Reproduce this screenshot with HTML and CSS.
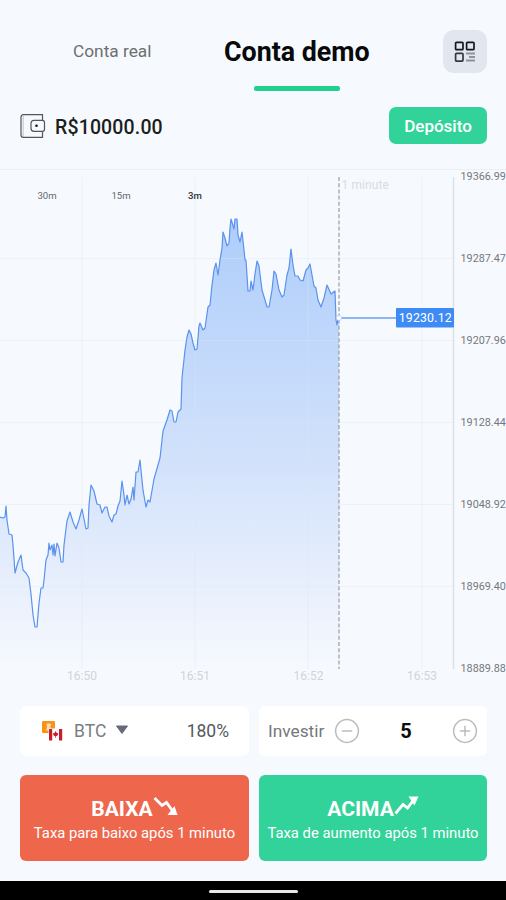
FILE: index.html
```html
<!DOCTYPE html>
<html lang="pt-BR">

<head>
   <meta charset="utf-8">
   <meta name="viewport" content="width=device-width, initial-scale=1">
   <title>Conta demo</title>
   <link rel="stylesheet" href="styles.css">
</head>

<body>

   <!-- account tabs -->
   <header class="tabs">
      <span class="tab">Conta real</span>
      <span class="tab tab-active">Conta demo</span>
      <button class="menu-btn" aria-label="Menu">
         <svg width="22" height="22" viewBox="0 0 22 22" fill="none" stroke="#15171b" stroke-width="1.7">
            <rect x="1.6" y="1.3" width="7.4" height="7.4" rx="1" />
            <rect x="12.6" y="1.3" width="7.4" height="7.4" rx="1" />
            <rect x="1.6" y="12.3" width="7.4" height="7.8" rx="1" stroke="#34373d" />
            <path d="M12 12.5h9M15 16h6M12 19.5h9" stroke="#8e939d" stroke-width="1.8" />
         </svg>
      </button>
   </header>

   <!-- balance -->
   <section class="balance">
      <svg class="wallet" width="26" height="26" viewBox="0 0 26 26" fill="none" stroke="#54575a" stroke-width="1.2">
         <path d="M22.5 7V1.7H3.5Q1 1.7 1 4.2V22Q1 24.4 3.5 24.4H22.5V18.5" />
         <path d="M3.2 2v22" stroke="#b5b8bb" stroke-width=".8" />
         <path d="M14 7.3H22.5Q24.5 7.3 24.5 9.5V16Q24.5 18.3 22.5 18.3H14Q11 18.3 11 15.3V10.3Q11 7.3 14 7.3Z" />
         <circle cx="16.500" cy="12.800" r="1.300" fill="#111" stroke="none" />
      </svg>
      <span class="amount">R$10000.00</span>
      <button class="deposit">Depósito</button>
   </section>

   <!-- price chart -->
   <section class="chart">
      <svg width="506" height="520" viewBox="0 170 506 520">
         <defs>
            <linearGradient id="area" gradientUnits="userSpaceOnUse" x1="0" y1="218" x2="0" y2="669">
               <stop offset="0" stop-color="#aecdfb" />
               <stop offset=".5" stop-color="#cfe0fb" />
               <stop offset=".85" stop-color="#ebf1fd" />
               <stop offset="1" stop-color="#f6f9fe" />
            </linearGradient>
         </defs>

         <path fill="url(#area)" d="M0 669V517L3 518 5 517 6 506 7 520 9 534 12 535 13 545 15 573 18 562 21 555 23 570 26 573 29 578 31 594 33 615 35 627H37L39 603 41 588H43L44 580 46 560 48 555 49 543 50 550 52 545 53 555 54 544 55 556 57 543 59 548 61 562H63L64 545 67 521 70 512 73 522 76 529 79 520 82 509 84 519 86 529 88 528 89 505 91 485 94 491 97 504 100 505 102 513 105 507H107L109 516 112 522 114 515 116 514 118 506 120 501 122 481 124 495 125 505 127 495 129 504 131 499 133 487 134 500 136 472H138L140 460 141 470 143 490 146 507 148 500 150 502 154 479 160 458 163 431 167 420 170 410 172 411 174 422H176L178 412 181 409 182 378 185 350 187 337 189 330 191 334 193 343 195 350 197 349 199 326 200 323 203 330 205 328 208 307 210 305 212 285 214 270 216 263 218 275 220 260 222 248 223 232 225 238 227 246 229 243 230 228 231 219 234 229 235 219H237L238 235 240 242 242 232 244 250 245 260H246L248 291H250L251 281 253 290 255 274 257 261 259 266 262 290 265 300 267 307H269L272 290 274 271 276 274 279 290 282 297 284 295 287 275 289 268 291 249 293 265 295 276H298L300 280 303 281 306 270 308 268 310 264 312 275 314 286 316 288 318 300 321 307 324 298 327 285 331 294 335 291 336 320 337 325 338 318H339V669Z" />

         <g class="grid">
            <path d="M82 177V669M195 177V669M308 177V669M422 177V669" />
            <path d="M0 258.500H453M0 340.500H453M0 422.500H453M0 504.500H453M0 586.500H453" />
         </g>
         <path class="axis" d="M453.500 177V669" />

         <path class="line" d="M0 517L3 518 5 517 6 506 7 520 9 534 12 535 13 545 15 573 18 562 21 555 23 570 26 573 29 578 31 594 33 615 35 627H37L39 603 41 588H43L44 580 46 560 48 555 49 543 50 550 52 545 53 555 54 544 55 556 57 543 59 548 61 562H63L64 545 67 521 70 512 73 522 76 529 79 520 82 509 84 519 86 529 88 528 89 505 91 485 94 491 97 504 100 505 102 513 105 507H107L109 516 112 522 114 515 116 514 118 506 120 501 122 481 124 495 125 505 127 495 129 504 131 499 133 487 134 500 136 472H138L140 460 141 470 143 490 146 507 148 500 150 502 154 479 160 458 163 431 167 420 170 410 172 411 174 422H176L178 412 181 409 182 378 185 350 187 337 189 330 191 334 193 343 195 350 197 349 199 326 200 323 203 330 205 328 208 307 210 305 212 285 214 270 216 263 218 275 220 260 222 248 223 232 225 238 227 246 229 243 230 228 231 219 234 229 235 219H237L238 235 240 242 242 232 244 250 245 260H246L248 291H250L251 281 253 290 255 274 257 261 259 266 262 290 265 300 267 307H269L272 290 274 271 276 274 279 290 282 297 284 295 287 275 289 268 291 249 293 265 295 276H298L300 280 303 281 306 270 308 268 310 264 312 275 314 286 316 288 318 300 321 307 324 298 327 285 331 294 335 291 336 320 337 325 338 318" />

         <!-- expiry marker and current price -->
         <path class="expiry" d="M339 177V669" />
         <path class="price-line" d="M339 318H397" />
         <circle cx="339" cy="318" r="2.500" fill="#fff" stroke="#a9c6f8" stroke-width=".6" />
         <rect x="396" y="308" width="58" height="19.500" rx="1" fill="#3f8bf5" />
         <text class="price" x="425.300" y="322.300">19230.12</text>
         <text class="minute" x="341.500" y="189">1 minute</text>

         <g class="range">
            <text x="47" y="199">30m</text>
            <text x="121" y="199">15m</text>
            <text class="range-on" x="195" y="199">3m</text>
         </g>
         <g class="values">
            <text x="460.500" y="180">19366.99</text>
            <text x="460.500" y="262">19287.47</text>
            <text x="460.500" y="344">19207.96</text>
            <text x="460.500" y="426">19128.44</text>
            <text x="460.500" y="508">19048.92</text>
            <text x="460.500" y="590">18969.40</text>
            <text x="460.500" y="672">18889.88</text>
         </g>
         <g class="times">
            <text x="82" y="680">16:50</text>
            <text x="195" y="680">16:51</text>
            <text x="308.500" y="680">16:52</text>
            <text x="422" y="680">16:53</text>
         </g>
      </svg>
   </section>

   <!-- order form -->
   <section class="order">
      <div class="field pair">
         <svg width="22" height="22" viewBox="0 0 22 22">
            <rect x="1" y="1" width="13" height="12" rx="1" fill="#f7931a" />
            <path d="M5.500 3.500H8.500Q10.500 3.500 10 5.500L9 6.500Q11 8 9.500 9.500L8 10.500H5L6 7Z" fill="#ffe0ac" />
            <rect x="7.500" y="8.500" width="14" height="12.500" rx="1" fill="#fff" />
            <path d="M8 9H11.200V20.500H8ZM18 9H21.200V20.500H18Z" fill="#c51f2b" />
            <path d="M14.600 11L15.700 13 17.500 13.500 16.500 15.500 14.900 16.300V18H14.300V16.300L12.700 15.500 11.800 13.500 13.500 13Z" fill="#c51f2b" />
         </svg>
         <span class="symbol">BTC</span>
         <svg class="caret" width="14" height="10" viewBox="0 0 14 10"><path d="M1.500 1H12.500L7 8.500Z" fill="#666a79" stroke="#666a79" stroke-linejoin="round" /></svg>
         <span class="payout">180%</span>
      </div>
      <div class="field invest">
         <span class="invest-label">Investir</span>
         <svg width="26" height="26" viewBox="0 0 26 26" fill="none" stroke="#bdbdbd" stroke-width="1.500"><circle cx="13" cy="13" r="11.400" /><path d="M7.800 13H18.200" /></svg>
         <span class="stake">5</span>
         <svg width="26" height="26" viewBox="0 0 26 26" fill="none" stroke="#bdbdbd" stroke-width="1.500"><circle cx="13" cy="13" r="11.400" /><path d="M7.800 13H18.200M13 7.800V18.200" /></svg>
      </div>
      <button class="trade down">
         <span class="trade-title">BAIXA<svg width="25" height="22" viewBox="0 0 25 22"><path d="M1.500 3L9 10.500 13.500 7.500 20 16.500" fill="none" stroke="#fff" stroke-width="2.800" /><path d="M21.500 11L24.500 20H14.500Z" fill="#fff" /></svg></span>
         <span class="trade-note">Taxa para baixo após 1 minuto</span>
      </button>
      <button class="trade up">
         <span class="trade-title">ACIMA<svg width="25" height="22" viewBox="0 0 25 22"><path d="M1.500 18.500L9 9.500 13.500 13 20 4.500" fill="none" stroke="#fff" stroke-width="2.800" /><path d="M14.500 1.500H24.500L20.500 10.500Z" fill="#fff" /></svg></span>
         <span class="trade-note">Taxa de aumento após 1 minuto</span>
      </button>
   </section>

   <footer class="navbar"><span class="handle"></span></footer>

</body>

</html>
```
FILE: styles.css
```css
* {
   box-sizing: border-box;
}
body {
   margin: 0;
   width: 506px;
   height: 900px;
   overflow: hidden;
   display: flex;
   flex-direction: column;
   background: #f6fafe;
   color: #0c0d0f;
   font-family: Roboto, "Liberation Sans", sans-serif;
}
button {
   border: none;
   padding: 0;
   font-family: inherit;
}
svg {
   display: block;
   flex: none;
}

.tabs {
   height: 95px;
   padding: 30px 19px 0 73px;
   display: flex;
   align-items: flex-start;
}
.tab {
   width: 151px;
   line-height: 43px;
   font-size: 17.3px;
   color: #6c6f73;
   white-space: nowrap;
}
.tab-active {
   width: 146px;
   line-height: 45px;
   font-size: 26.8px;
   font-weight: 700;
   color: #08090a;
}
.tab-active::after {
   content: "";
   display: block;
   width: 86px;
   height: 5px;
   margin: 11px auto 0;
   border-radius: 2px;
   background: #20d08e;
}
.menu-btn {
   width: 44px;
   height: 43px;
   margin-left: auto;
   border-radius: 11px;
   background: #e1e6ef;
   display: flex;
   align-items: center;
   justify-content: center;
}

.balance {
   height: 75px;
   padding: 12px 19px 0 20px;
   display: flex;
   align-items: flex-start;
   border-bottom: 1px solid #edf0f3;
}
.wallet {
   margin-top: 6px;
}
.amount {
   margin-left: 9px;
   line-height: 41px;
   font-size: 19.5px;
   font-weight: 500;
   letter-spacing: .15px;
   color: #1c1e20;
}
.deposit {
   width: 98px;
   height: 37px;
   margin-left: auto;
   border-radius: 7px;
   background: #31d39a;
   color: #fff;
   font-size: 17px;
   font-weight: 500;
}

.chart {
   height: 520px;
}
.grid {
   fill: none;
   stroke: #dfe7ef;
   stroke-opacity: .4;
}
.axis {
   stroke: #dde1e5;
   stroke-width: 1.5;
}
.line {
   fill: none;
   stroke: #5a92ee;
   stroke-width: 1.2;
   stroke-linejoin: round;
}
.expiry {
   stroke: #a0a4a9;
   stroke-width: 1.3;
   stroke-dasharray: 4 2.2;
}
.price-line {
   stroke: #6c9ff1;
   stroke-width: 1.3;
}
.price {
   fill: #fff;
   font-size: 12.3px;
   letter-spacing: .2px;
   text-anchor: middle;
}
.minute {
   fill: #d8dce0;
   font-size: 12px;
   letter-spacing: .1px;
}
.range {
   fill: #66696d;
   font-size: 9.6px;
   text-anchor: middle;
}
.range-on {
   fill: #303234;
   font-weight: 500;
}
.values {
   fill: #74787d;
   font-size: 10.8px;
}
.times {
   fill: #d0d4d9;
   font-size: 12px;
   text-anchor: middle;
}

.order {
   height: 191px;
   padding: 16px 19px 0 20px;
   display: grid;
   grid-template-columns: 229px 228px;
   grid-template-rows: 50px 86px;
   gap: 19px 10px;
}
.field {
   display: flex;
   align-items: center;
   border-radius: 6px;
   background: #fff;
}
.pair {
   padding: 0 20px 0 21px;
   color: #7a7d81;
   font-size: 17.5px;
}
.symbol {
   margin-left: 11px;
}
.caret {
   margin: 0 0 2px 9px;
}
.payout {
   margin-left: auto;
   color: #56585b;
}
.invest {
   padding: 0 9px;
   color: #75787b;
}
.invest-label {
   width: 66px;
   font-size: 17.3px;
}
.stake {
   flex: 1;
   text-align: center;
   color: #0c0d0f;
   font-size: 20px;
   font-weight: 700;
}
.trade {
   border-radius: 6px;
   color: #fff;
   display: flex;
   flex-direction: column;
   align-items: center;
   padding-top: 20px;
}
.down {
   background: #ee674d;
}
.up {
   background: #31d39a;
}
.trade-title {
   display: flex;
   height: 27px;
   line-height: 28px;
   font-size: 21px;
   font-weight: 700;
}
.trade-note {
   line-height: 22px;
   font-size: 14.8px;
   white-space: nowrap;
}

.navbar {
   height: 19px;
   background: #000;
   display: flex;
   align-items: center;
   justify-content: center;
}
.handle {
   width: 89px;
   height: 3px;
   margin-top: 2px;
   border-radius: 2px;
   background: #e8e8e8;
}
```
